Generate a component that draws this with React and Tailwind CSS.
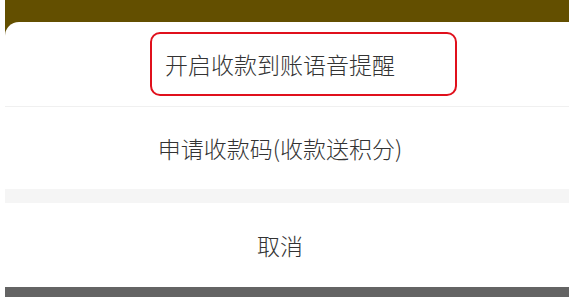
export default function App() {
  return (
    <div
      className="flex h-[297px] w-[569px] flex-col overflow-hidden bg-white pl-[5px]"
      style={{ fontFamily: '"Noto Sans CJK SC", "Noto Sans", sans-serif' }}
    >
      <div className="flex h-[297px] flex-col bg-[#634f00]">
        <div className="h-[22px] shrink-0" />
        <div className="relative flex flex-1 flex-col rounded-tl-[14px] bg-white text-[23px] font-light text-[#333333]">
          <div className="flex h-[84px] items-center justify-center pr-[14px]">开启收款到账语音提醒</div>
          <div className="h-px bg-[#f0f0f0]" />
          <div className="flex h-[82px] items-center justify-center pr-[14px]">申请收款码(收款送积分)</div>
          <div className="h-[14px] bg-[#f5f5f5]" />
          <div className="flex h-[84px] items-center justify-center pr-[14px]">取消</div>
          <div className="h-[10px] bg-[#646464]" />
          {/* red annotation box */}
          <div className="absolute left-[145px] top-[10px] h-[64px] w-[307px] rounded-[10px] border-2 border-[#e0101c]" />
        </div>
      </div>
    </div>
  )
}
